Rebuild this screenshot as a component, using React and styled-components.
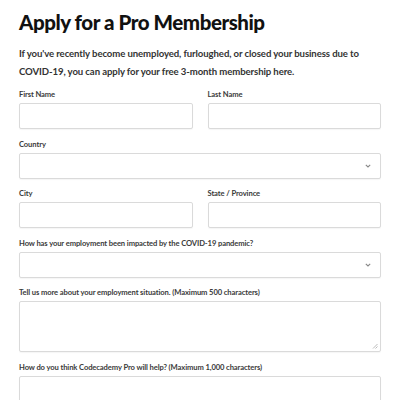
import styled, { createGlobalStyle } from "styled-components";

const GlobalStyle = createGlobalStyle`
	body {
		margin: 0;
		background: #fff;
		font-family: Lato, "Noto Sans", sans-serif;
		color: #222;
	}
`;

//#region Styles
const Page = styled.main`
	padding: 0 19px;
`;

const Title = styled.h1`
	margin: 0;
	padding-top: 8px;
	font-size: 20.5px;
	line-height: 28px;
	font-weight: 900;
	color: #111;
	letter-spacing: -0.45px;
`;

const Intro = styled.p`
	margin: 9px 0 7px;
	font-size: 9.6px;
	line-height: 18px;
	font-weight: 700;
	color: #333;
	letter-spacing: -0.1px;
`;

const Row = styled.div`
	display: grid;
	grid-template-columns: ${(p) => (p.split ? "1fr 1fr" : "1fr")};
	column-gap: 15px;
`;

const Field = styled.label`
	display: flex;
	flex-direction: column;
	margin-bottom: 8.5px;
`;

const LabelText = styled.span`
	font-size: 7.6px;
	line-height: 12px;
	font-weight: 700;
	color: #3a3a3a;
	letter-spacing: -0.1px;
	margin-bottom: 3px;
	white-space: nowrap;
`;

const Box = styled.div`
	position: relative;
	height: ${(p) => (p.tall ? 51 : 26)}px;
	border: 1px solid #dadada;
	border-radius: 2px;
	box-sizing: border-box;
	background: #fff;
	box-shadow: 0 1px 1px rgba(0, 0, 0, 0.04);
`;

const Chevron = styled.svg`
	position: absolute;
	right: 9px;
	top: 50%;
	transform: translateY(-50%);
`;

const Grip = styled.svg`
	position: absolute;
	right: 2px;
	bottom: 2px;
`;
//#endregion

function Input({ label }) {
	return (
		<Field>
			<LabelText>{label}</LabelText>
			<Box />
		</Field>
	);
}

function Select({ label }) {
	return (
		<Field>
			<LabelText>{label}</LabelText>
			<Box>
				<Chevron width="6" height="4" viewBox="0 0 6 4">
					<path d="M0.8 0.8 L3 3 L5.2 0.8" fill="none" stroke="#888" strokeWidth="1.1" />
				</Chevron>
			</Box>
		</Field>
	);
}

function TextArea({ label }) {
	return (
		<Field>
			<LabelText>{label}</LabelText>
			<Box tall>
				<Grip width="6" height="6" viewBox="0 0 6 6">
					<path d="M5.5 1 L1 5.5 M5.5 3.5 L3.5 5.5" stroke="#aaa" strokeWidth="0.8" />
				</Grip>
			</Box>
		</Field>
	);
}

export default function App() {
	return (
		<>
			<GlobalStyle />
			<Page>
				<Title>Apply for a Pro Membership</Title>
				<Intro>
					If you've recently become unemployed, furloughed, or closed your business due to
					<br />
					COVID-19, you can apply for your free 3-month membership here.
				</Intro>
				<Row split>
					<Input label="First Name" />
					<Input label="Last Name" />
				</Row>
				<Row>
					<Select label="Country" />
				</Row>
				<Row split>
					<Input label="City" />
					<Input label="State / Province" />
				</Row>
				<Row>
					<Select label="How has your employment been impacted by the COVID-19 pandemic?" />
				</Row>
				<Row>
					<TextArea label="Tell us more about your employment situation. (Maximum 500 characters)" />
				</Row>
				<Row>
					<TextArea label="How do you think Codecademy Pro will help? (Maximum 1,000 characters)" />
				</Row>
			</Page>
		</>
	);
}
